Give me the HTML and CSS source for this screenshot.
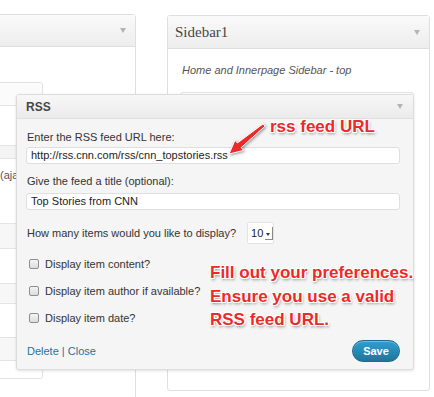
FILE: index.html
```html
<!DOCTYPE html>
<html>
<head>
<meta charset="utf-8">
<link rel="stylesheet" href="styles.css">
</head>
<body>
<div class="stage">
  <div class="bg">
    <div class="box box-left">
      <div class="box-head"><span class="title"></span><span class="caret"></span></div>
      <div class="box-body">
        <div class="list">
          <div class="row r1"></div>
          <div class="row r2"></div>
          <div class="row r3"></div>
          <div class="row r4"><span class="row-text">(ajax)</span></div>
          <div class="row r5"></div>
          <div class="row r6"></div>
          <div class="row r7"></div>
          <div class="row r8"></div>
          <div class="row r9"></div>
          <div class="row r10"></div>
        </div>
      </div>
    </div>
    <div class="box box-right">
      <div class="box-head"><span class="title serif">Sidebar1</span><span class="caret"></span></div>
      <div class="box-body">
        <p class="desc">Home and Innerpage Sidebar - top</p>
        <div class="drop-area"></div>
      </div>
    </div>
  </div>

  <div class="widget">
    <div class="widget-head"><span class="widget-title">RSS</span><span class="caret"></span></div>
    <div class="widget-body">
      <label class="lbl l1">Enter the RSS feed URL here:</label>
      <div class="field f1">http://rss.cnn.com/rss/cnn_topstories.rss</div>
      <label class="lbl l2">Give the feed a title (optional):</label>
      <div class="field f2">Top Stories from CNN</div>
      <div class="count-row">
        <span class="lbl">How many items would you like to display?</span>
        <span class="select"><span class="sel-val">10</span><span class="sel-arrow"></span></span>
      </div>
      <div class="check"><span class="cb"></span><span class="lbl">Display item content?</span></div>
      <div class="check"><span class="cb"></span><span class="lbl">Display item author if available?</span></div>
      <div class="check"><span class="cb"></span><span class="lbl">Display item date?</span></div>
      <div class="footer">
        <span class="links"><a class="lnk">Delete</a> | <a class="lnk">Close</a></span>
        <span class="save">Save</span>
      </div>
    </div>
  </div>

  <div class="note note1">rss feed URL</div>
  <svg class="note-arrow" width="46" height="42" viewBox="0 0 46 42">
    <polygon points="37,5.9 39,8.2 15.2,29.6 17.6,32.4 3,36 9,22.2 11.4,25" fill="#ec2a2a" stroke="#fff" stroke-width="1" stroke-linejoin="round"/>
  </svg>
  <div class="note note2">Fill out your preferences.<br>Ensure you use a valid<br>RSS feed URL.</div>
</div>
</body>
</html>
```

FILE: styles.css
```css
html, body {
  margin: 0;
  padding: 0;
  background: #fff;
}
.stage {
  position: relative;
  width: 434px;
  height: 397px;
  overflow: hidden;
  background: #fff;
  font-family: "Liberation Sans", Arial, sans-serif;
  color: #333;
}
.bg {
  display: flex;
  align-items: flex-start;
}
.box {
  box-sizing: border-box;
  border: 1px solid #dfdfdf;
  border-radius: 3px;
  background: #fff;
}
.box-left {
  margin-left: -12px;
  margin-top: 14px;
  width: 148px;
  height: 420px;
}
.box-right {
  margin-left: 31px;
  margin-top: 15px;
  width: 263px;
  height: 376px;
}
.box-head {
  box-sizing: border-box;
  height: 32px;
  border-bottom: 1px solid #dfdfdf;
  background: linear-gradient(#fafafa, #ededed);
  display: flex;
  align-items: center;
  justify-content: space-between;
  padding: 0 9px 0 7px;
}
.box-right .box-head {
  height: 33px;
}
.title {
  font-size: 15px;
  color: #464646;
}
.serif {
  font-family: "Liberation Serif", Georgia, serif;
}
.caret {
  width: 0;
  height: 0;
  border-left: 3.5px solid transparent;
  border-right: 3.5px solid transparent;
  border-top: 5px solid #b4b4b4;
}
.list {
  margin-top: 35px;
  width: 53px;
  border: 1px solid #e2e2e2;
  border-left: none;
  border-radius: 0 3px 3px 0;
}
.row {
  box-sizing: border-box;
  border-bottom: 1px solid #e4e4e4;
  background: #fff;
}
.r1 { height: 23px; background: #fbfbfb; }
.r2 { height: 40px; }
.r3 { height: 13px; background: #f4f4f4; }
.r4 { height: 65px; position: relative; }
.r5 { height: 25px; background: #f7f7f7; }
.r6 { height: 35px; }
.r7 { height: 20px; background: #f7f7f7; }
.r8 { height: 34px; }
.r9 { height: 23px; background: #f7f7f7; }
.r10 { height: 17px; border-bottom: none; }
.row-text {
  display: block;
  padding: 10px 0 0 11px;
  font-size: 11px;
  color: #555;
  white-space: nowrap;
}
.desc {
  margin: 15px 0 0 14px;
  font-size: 11px;
  line-height: 13px;
  font-style: italic;
  color: #555;
}
.drop-area {
  margin: 15px 15px 0 12px;
  height: 268px;
  border: 1px solid #e2e2e2;
  border-radius: 3px;
}

/* Widget overlay */
.widget {
  position: absolute;
  left: 16px;
  top: 94px;
  width: 398px;
  box-sizing: border-box;
  border: 1px solid #dcdcdc;
  border-radius: 3px;
  background: #f5f5f5;
  box-shadow: 0 1px 3px rgba(0, 0, 0, 0.12);
}
.widget-head {
  box-sizing: border-box;
  height: 24px;
  border-bottom: 1px solid #dfdfdf;
  background: linear-gradient(#f7f7f7, #ebebeb);
  display: flex;
  align-items: center;
  justify-content: space-between;
  padding: 0 10px 0 9px;
}
.widget-title {
  font-size: 12px;
  font-weight: bold;
  color: #464646;
}
.widget-body {
  padding: 11px 13px 7px 9px;
}
.lbl {
  display: block;
  font-size: 11px;
  line-height: 14px;
  color: #333;
  white-space: nowrap;
}
.l1, .l2 {
  padding-left: 1px;
}
.l2 {
  margin-top: 10px;
}
.field {
  box-sizing: border-box;
  height: 17px;
  margin-top: 3px;
  border: 1px solid #dfdfdf;
  border-radius: 3px;
  background: #fff;
  font-size: 11px;
  line-height: 15px;
  padding-left: 4px;
  color: #222;
}
.f2 {
  margin-top: 5px;
}
.count-row {
  display: flex;
  align-items: center;
  margin-top: 12px;
  height: 22px;
  padding-left: 1px;
}
.select {
  display: flex;
  align-items: center;
  box-sizing: border-box;
  margin-left: 11px;
  width: 27px;
  height: 22px;
  border: 1px solid #e4e4e4;
  border-radius: 2px;
  background: #fff;
  padding-left: 3px;
}
.sel-val {
  font-size: 11px;
  color: #222;
}
.sel-arrow {
  position: relative;
  margin-left: 2px;
  width: 7px;
  height: 12px;
  border-right: 1px solid #888;
  border-bottom: 1px solid #888;
}
.sel-arrow::after {
  content: "";
  position: absolute;
  left: 1px;
  top: 6px;
  border-left: 2.5px solid transparent;
  border-right: 2.5px solid transparent;
  border-top: 3px solid #333;
}
.check {
  display: flex;
  align-items: center;
  height: 14px;
  margin-top: 13px;
}
.cb {
  box-sizing: border-box;
  width: 10px;
  height: 10px;
  margin-left: 3px;
  margin-right: 6px;
  border: 1px solid #8e8e8e;
  border-radius: 2px;
  background: linear-gradient(#f4f4f4, #dcdcdc);
}
.footer {
  display: flex;
  align-items: center;
  justify-content: space-between;
  margin-top: 15px;
  height: 22px;
  padding-left: 1px;
  font-size: 11px;
  color: #21759b;
}
.lnk {
  color: #21759b;
  text-decoration: none;
}
.save {
  box-sizing: border-box;
  width: 48px;
  height: 22px;
  border: 1px solid #1e6a8d;
  border-radius: 11px;
  background: linear-gradient(#2e9fd2, #21759b);
  color: #fff;
  font-size: 11px;
  font-weight: bold;
  text-align: center;
  line-height: 20px;
  box-shadow: inset 0 1px 0 rgba(255, 255, 255, 0.3);
}

/* Annotations */
.note {
  position: absolute;
  font-family: "Liberation Sans", Arial, sans-serif;
  font-weight: bold;
  font-size: 17px;
  color: #ec2a2a;
  white-space: nowrap;
  text-shadow:
    1px 0 0 #fff, -1px 0 0 #fff, 0 1px 0 #fff, 0 -1px 0 #fff,
    1px 1px 0 #fff, -1px -1px 0 #fff, 1px -1px 0 #fff, -1px 1px 0 #fff,
    1px 2px 3px rgba(0, 0, 0, 0.45);
}
.note1 {
  left: 270px;
  top: 117px;
  line-height: 20px;
}
.note2 {
  left: 210px;
  top: 261px;
  line-height: 23.5px;
}
.note-arrow {
  position: absolute;
  left: 226px;
  top: 118px;
  filter: drop-shadow(1px 1px 1.5px rgba(0, 0, 0, 0.4));
}
```
